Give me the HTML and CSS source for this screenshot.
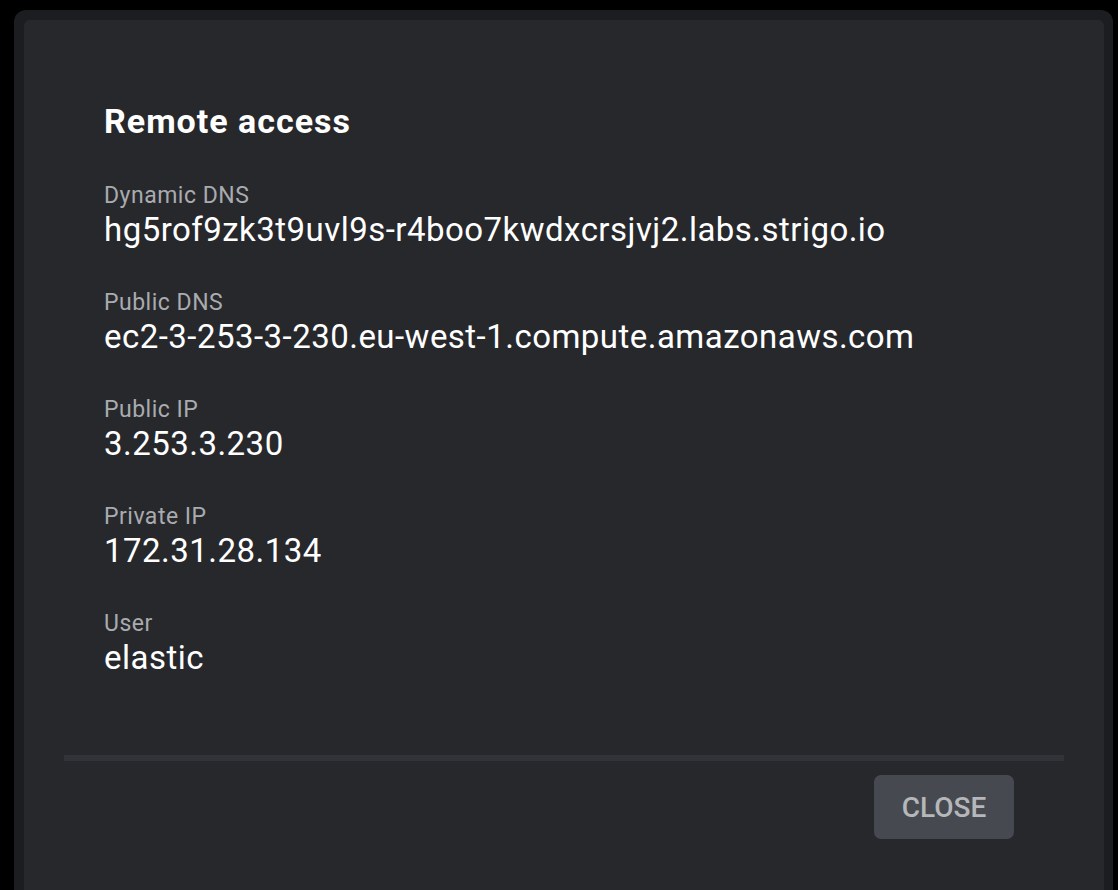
FILE: index.html
```html
<!DOCTYPE html>
<html lang="en">
<head>
<meta charset="utf-8">
<title>Remote access</title>
<link rel="stylesheet" href="styles.css">
</head>
<body>
<div class="frame">
  <div class="panel">
    <div class="content">
      <h2 class="title">Remote access</h2>
      <div class="field">
        <div class="label">Dynamic DNS</div>
        <div class="value">hg5rof9zk3t9uvl9s-r4boo7kwdxcrsjvj2.labs.strigo.io</div>
      </div>
      <div class="field">
        <div class="label">Public DNS</div>
        <div class="value">ec2-3-253-3-230.eu-west-1.compute.amazonaws.com</div>
      </div>
      <div class="field">
        <div class="label">Public IP</div>
        <div class="value">3.253.3.230</div>
      </div>
      <div class="field">
        <div class="label">Private IP</div>
        <div class="value">172.31.28.134</div>
      </div>
      <div class="field">
        <div class="label">User</div>
        <div class="value">elastic</div>
      </div>
    </div>
    <div class="divider"></div>
    <div class="actions">
      <button class="close-btn" type="button">CLOSE</button>
    </div>
  </div>
</div>
</body>
</html>
```
FILE: styles.css
```css
html, body {
  margin: 0;
  padding: 0;
  background: #000;
  height: 100%;
  overflow: hidden;
}

body {
  font-family: Roboto, "Noto Sans", "Liberation Sans", sans-serif;
}

.frame {
  margin: 10px 5px 0 14px;
  padding: 10px 9px 0 10px;
  background: #1c1d20;
  border-radius: 12px 12px 0 0;
  min-height: 880px;
  box-sizing: border-box;
}

.panel {
  background: #27282c;
  border-radius: 6px 6px 0 0;
  padding: 81px 40px 0;
  min-height: 870px;
  box-sizing: border-box;
}

.content {
  padding: 0 40px;
  display: flex;
  flex-direction: column;
  gap: 39px;
}

.title {
  margin: 0 0 2px;
  font-size: 34px;
  line-height: 40px;
  font-weight: 700;
  letter-spacing: 1px;
  color: #ffffff;
}

.field {
  display: flex;
  flex-direction: column;
}

.label {
  font-size: 23px;
  line-height: 28px;
  letter-spacing: 0.5px;
  color: #a9abaf;
}

.value {
  font-size: 33px;
  line-height: 40px;
  letter-spacing: 0.47px;
  color: #ffffff;
}

.divider {
  margin-top: 77px;
  height: 6px;
  background: #313338;
}

.actions {
  display: flex;
  justify-content: flex-end;
  padding: 14px 50px 0 0;
}

.close-btn {
  width: 140px;
  height: 64px;
  border: none;
  border-radius: 7px;
  background: #464a50;
  color: #b5b7ba;
  font-family: Roboto, "Noto Sans", "Liberation Sans", sans-serif;
  font-size: 28px;
  font-weight: 500;
  padding: 0;
}
```
